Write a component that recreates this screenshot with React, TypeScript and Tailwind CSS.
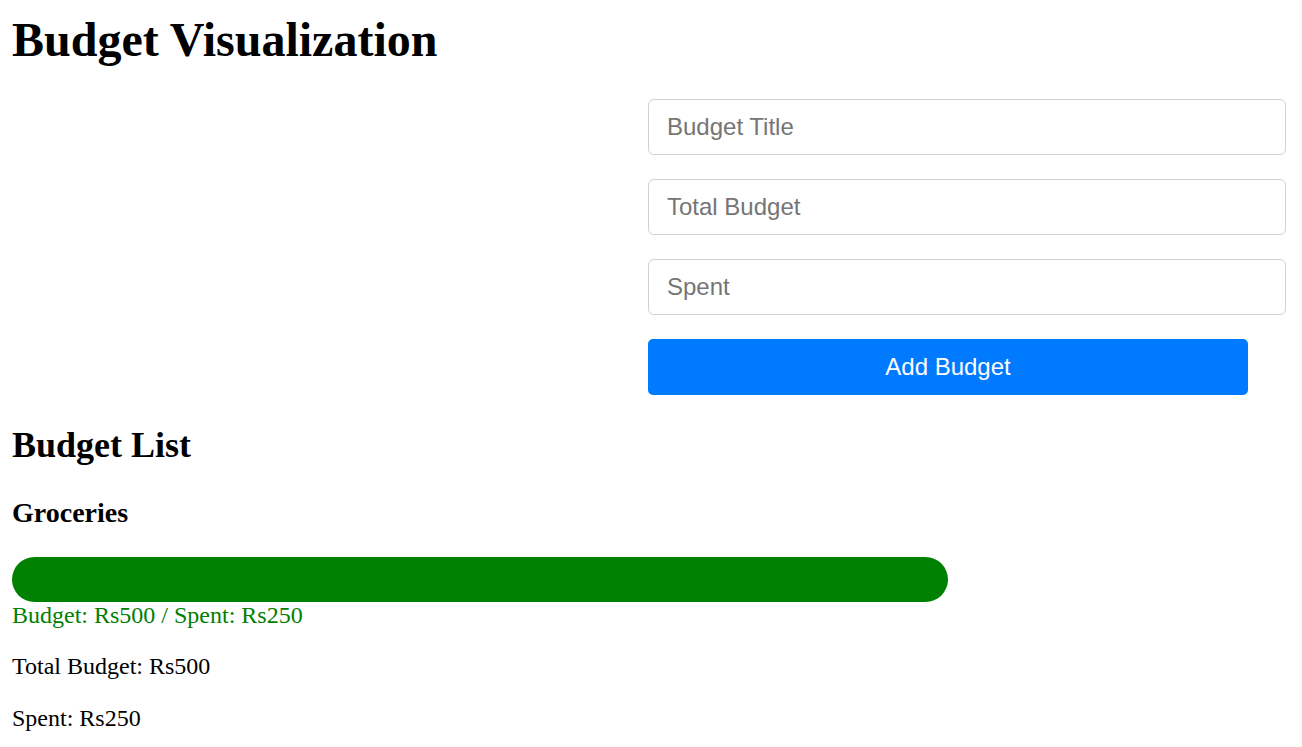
import { useState } from "react";

type Budget = { title: string; total: number; spent: number };

const serif = "font-['Liberation_Serif','Times_New_Roman',serif]";
const sans = "font-['Liberation_Sans',Arial,sans-serif]";

export default function App() {
  const [budgets] = useState<Budget[]>([{ title: "Groceries", total: 500, spent: 250 }]);

  return (
    <div className={`${serif} p-[12px] text-black bg-white min-h-screen`}>
      <h1 className="text-[48px] font-bold leading-[1.15] mb-[32px]">Budget Visualization</h1>

      <div className="flex">
        <div className="w-[636px] shrink-0" />
        <form className={`${sans} flex flex-col gap-[24px] w-[638px]`} onSubmit={(e) => e.preventDefault()}>
          <input
            placeholder="Budget Title"
            className="h-[56px] w-full border border-[#d1d1d1] rounded-[6px] px-[18px] text-[24px] placeholder:text-[#757575] outline-none"
          />
          <input
            placeholder="Total Budget"
            className="h-[56px] w-full border border-[#d1d1d1] rounded-[6px] px-[18px] text-[24px] placeholder:text-[#757575] outline-none"
          />
          <input
            placeholder="Spent"
            className="h-[56px] w-full border border-[#d1d1d1] rounded-[6px] px-[18px] text-[24px] placeholder:text-[#757575] outline-none"
          />
          <button type="submit" className="h-[56px] w-[600px] bg-[#007bff] text-white text-[24px] rounded-[5px]">
            Add Budget
          </button>
        </form>
      </div>

      <h2 className="text-[36px] font-bold leading-[1.15] mt-[30px] mb-[30px]">Budget List</h2>

      {budgets.map((b) => (
        <div key={b.title}>
          <h3 className="text-[28px] font-bold leading-[1.15] mb-[28px]">{b.title}</h3>
          <div className="w-[936px] h-[45px] rounded-full bg-[#008000]" />
          <p className="text-[24px] leading-[1.15] text-[#008000]">
            Budget: Rs{b.total} / Spent: Rs{b.spent}
          </p>
          <p className="text-[24px] leading-[1.15] my-[24px]">Total Budget: Rs{b.total}</p>
          <p className="text-[24px] leading-[1.15] my-[24px]">Spent: Rs{b.spent}</p>
        </div>
      ))}
    </div>
  );
}
